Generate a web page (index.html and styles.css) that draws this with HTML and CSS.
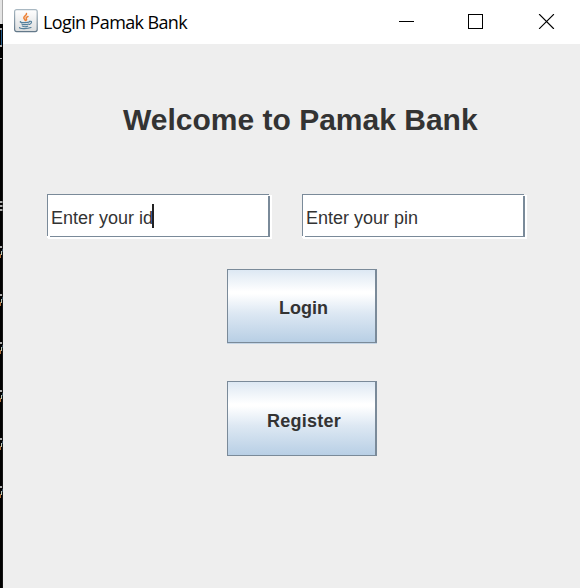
FILE: index.html
```html
<!DOCTYPE html>
<html lang="en">
<head>
<meta charset="utf-8">
<title>Login Pamak Bank</title>
<link rel="stylesheet" href="styles.css">
</head>
<body>
<div class="desktop">
  <svg class="backdrop" width="3" height="588" viewBox="0 0 3 588" shape-rendering="crispEdges" aria-hidden="true">
    <defs>
      <g id="edge-glyph">
        <path d="M0 0h2v2H0z" fill="#aaa"/>
        <path d="M2 3h1v3H2z" fill="#4d7da5"/>
        <path d="M1 5h1v4H1z" fill="#b9c5b5"/>
        <path d="M0 8h1v4H0z" fill="#a86b38"/>
      </g>
    </defs>
    <path d="M0 0h3v588H0z" fill="#000"/>
    <path d="M0 0h2v24H0z" fill="#e4e4e4"/>
    <path d="M2 0h1v24H2z" fill="#aaa"/>
    <path d="M0 28h2v2H0zM0 45h2v2H0zM0 58h2v1H0z" fill="#aaa"/>
    <path d="M1 30h1v15H1z" fill="#245c8c"/>
    <path d="M0 201h3v2H0zM0 205h3v2H0zM0 209h3v2H0z" fill="#aaa"/>
    <use href="#edge-glyph" y="246"/>
    <use href="#edge-glyph" y="294"/>
    <use href="#edge-glyph" y="342"/>
    <use href="#edge-glyph" y="390"/>
    <use href="#edge-glyph" y="438"/>
    <use href="#edge-glyph" y="486"/>
    <path d="M2 60h1v528H2z" fill="#222" opacity=".6"/>
  </svg>
  <div class="window">
    <header class="titlebar">
      <svg class="java" width="24" height="24" viewBox="0 0 24 24" aria-hidden="true">
        <defs>
          <linearGradient id="tile" x1="0" y1="0" x2="0" y2="1"><stop offset="0" stop-color="#fff"/><stop offset="1" stop-color="#dcdedf"/></linearGradient>
          <linearGradient id="rim" x1="0" y1="0" x2="0" y2="1"><stop offset="0" stop-color="#a9b8c2"/><stop offset="1" stop-color="#63798a"/></linearGradient>
        </defs>
        <rect x=".6" y=".6" width="22.6" height="22" rx="2" fill="url(#tile)" stroke="url(#rim)" stroke-width="1.2"/>
        <g fill="none" stroke-linecap="round">
          <path d="M12.500 4.500c.5 1.800-2.700 2.300-2.700 4.300 0 1.200 1.400 1.600 1.400 2.600M14 7.500c-1.800.7-2.300 1.300-1.600 2.300.4.700 0 1.300-.5 1.600" stroke="#ed8135" stroke-width="1.500"/>
          <path d="M6.500 12.600c-1.200.8 1.500 1.100 4.500 1 2.300 0 4-.4 4.700-.8M7.700 15c.7.900 5.300.9 7 .1M8.300 17c1.300.8 4 .7 5.400.2M15.500 12.400c2.500-.7 3 1.600 0 3M5.700 18.500c-1.500 1.300 7.500 1.800 11.300.1" stroke="#55809c" stroke-width="1.150"/>
        </g>
      </svg>
      <span class="caption">Login Pamak Bank</span>
      <svg class="controls" width="156" height="15" viewBox="0 0 156 15" shape-rendering="crispEdges" fill="none" stroke="#000" aria-hidden="true">
        <path d="M0 7.500h15M69.500.5h14v14h-14z"/>
        <path d="M140.500.5l14 14M154.500.5l-14 14" shape-rendering="auto" stroke-linecap="square" stroke-width="1.100"/>
      </svg>
    </header>
    <main class="content">
      <h1 class="heading">Welcome to Pamak Bank</h1>
      <div class="fields">
        <div class="field"><span class="field-text">Enter your id</span><i class="caret"></i></div>
        <div class="field"><span class="field-text">Enter your pin</span></div>
      </div>
      <div class="actions">
        <button class="button login">Login</button>
        <button class="button register">Register</button>
      </div>
    </main>
  </div>
</div>
</body>
</html>
```
FILE: styles.css
```css
* { box-sizing: border-box; }
body { margin: 0; overflow: hidden; }
.desktop { display: flex; width: 580px; height: 588px; }
.backdrop { flex: none; display: block; }
.window {
  flex: 1;
  display: flex;
  flex-direction: column;
  background: #eee;
  font-family: "Liberation Sans", Arial, sans-serif;
  color: #333;
}
.titlebar {
  display: flex;
  height: 44px;
  padding-left: 11px;
  background: #fff;
}
.java { margin-top: 9px; flex: none; }
.caption {
  margin: 10px 0 0 5px;
  width: 150px;
  font: 18px/25px "Open Sans", "Noto Sans", sans-serif;
  letter-spacing: -0.62px;
  color: #000;
  white-space: nowrap;
}
.controls { margin: 14px 25px 0 auto; flex: none; }
.content { flex: 1; }
.heading {
  margin: 58px 0 0 120px;
  font-size: 30px;
  line-height: 36px;
  font-weight: 700;
  white-space: nowrap;
}
.fields { display: flex; gap: 30px; margin: 56px 0 0 44px; }
/* Etched border: grey lines with open corners over a white highlight */
.field {
  display: flex;
  align-items: center;
  width: 225px;
  height: 45px;
  padding: 0 2px 2px 4px;
  background:
    linear-gradient(#7a8a99, #7a8a99) 0 0 / 222px 1px no-repeat,
    linear-gradient(#7a8a99, #7a8a99) 0 0 / 1px 42px no-repeat,
    linear-gradient(#7a8a99, #7a8a99) 221px 2px / 2px 41px no-repeat,
    linear-gradient(#7a8a99, #7a8a99) 3px 42px / 220px 1px no-repeat,
    linear-gradient(#eee, #eee) right top / 3px 1px no-repeat,
    linear-gradient(#eee, #eee) left bottom / 1px 1px no-repeat,
    #fff;
}
.field-text { font-size: 18px; line-height: 22px; padding-top: 4px; white-space: nowrap; }
.caret { width: 2px; height: 24px; background: #222; margin-left: -1px; }
.actions {
  display: flex;
  flex-direction: column;
  gap: 37px;
  margin: 30px 0 0 224px;
  width: 150px;
}
.button {
  height: 75px;
  padding: 3px 0 0 4px;
  border: 1px solid #7a8a99;
  border-right-width: 2px;
  border-radius: 0;
  background: linear-gradient(#dde8f3 0%, #fff 30%, #fff 33%, #dde8f3 60%, #b8cfe5 100%);
  font: bold 18px/22px "Liberation Sans", Arial, sans-serif;
  color: #333;
}
.login { height: 74px; box-shadow: 0 1px 0 #c5d5e5; margin-bottom: 1px; padding-top: 4px; }
.register { padding-top: 5px; padding-left: 5px; letter-spacing: 0.25px; }
```
